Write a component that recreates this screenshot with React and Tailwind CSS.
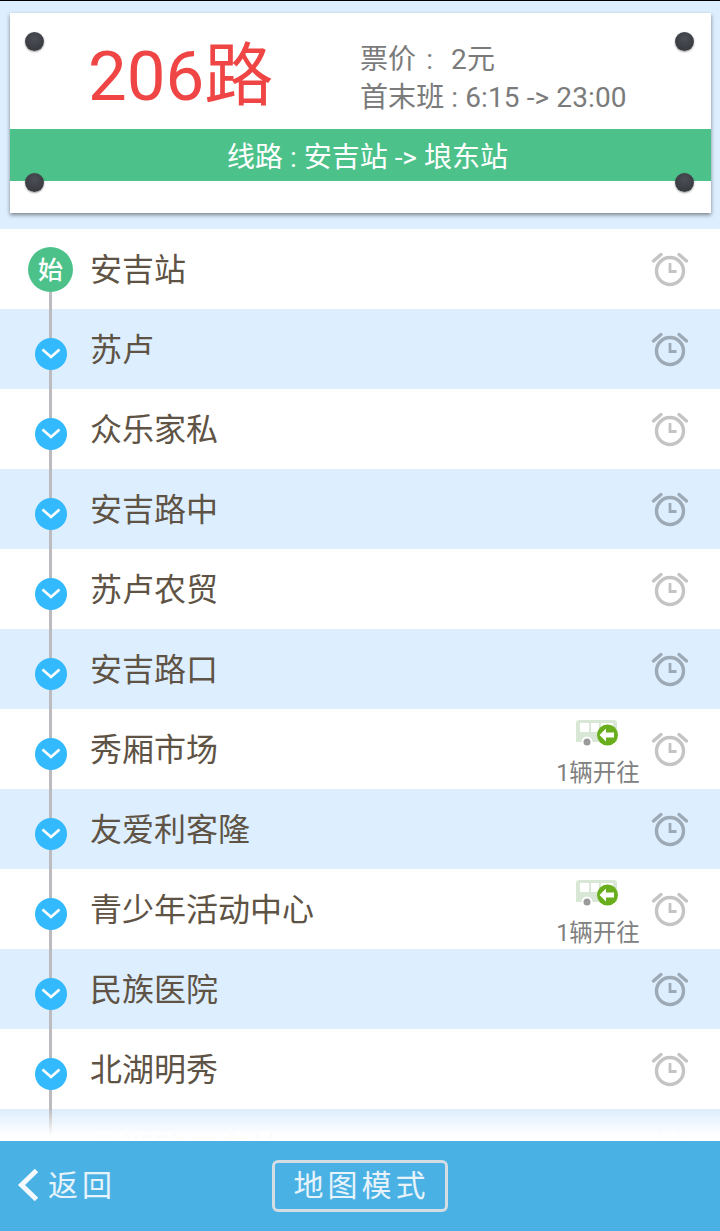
import React from "react";

const FONT = "font-['Roboto','Noto_Sans_CJK_SC',sans-serif]";

const STOPS = [
  { name: "安吉站", start: true },
  { name: "苏卢" },
  { name: "众乐家私" },
  { name: "安吉路中" },
  { name: "苏卢农贸" },
  { name: "安吉路口" },
  { name: "秀厢市场", bus: true },
  { name: "友爱利客隆" },
  { name: "青少年活动中心", bus: true },
  { name: "民族医院" },
  { name: "北湖明秀" },
  // cut off by the footer fade, its marker never shows
  { name: "北湖路口东站", noMarker: true },
];

function Pin({ className }) {
  return (
    <div className={`absolute w-[19px] h-[19px] rounded-full bg-[radial-gradient(circle_at_50%_35%,#4c4f56,#303237)] shadow-[0_1px_2px_rgba(0,0,0,0.4)] ${className}`} />
  );
}

function Alarm({ color }) {
  return (
    <svg width="38" height="36" viewBox="0 0 38 36" fill="none" stroke={color} strokeLinecap="round">
      <circle cx="19" cy="20" r="13.500" strokeWidth="3.4" />
      <path d="M19 12v8.500h6.500" strokeWidth="2.800" strokeLinecap="butt" />
      <path d="M2.500 10 10 3.500M35.500 10 28 3.500" strokeWidth="3.400" />
    </svg>
  );
}

function BusIcon() {
  return (
    <svg width="43" height="28" viewBox="0 0 43 28">
      <path d="M3 0h35a3 3 0 0 1 3 3v19H0V3a3 3 0 0 1 3-3z" fill="#d9e8d6" />
      <rect x="4" y="3" width="9" height="9" fill="#fff" />
      <rect x="15" y="3" width="8" height="9" fill="#fff" />
      <rect x="25" y="3" width="12" height="9" fill="#fff" />
      <circle cx="11" cy="22" r="5.500" fill="#fff" />
      <circle cx="11" cy="22" r="3.500" fill="#9a9a9a" />
      <circle cx="31.500" cy="15" r="10.500" fill="#69ae1c" />
      <path d="M23.500 15l6.500-6.500v4h8v5h-8v4z" fill="#fff" />
    </svg>
  );
}

function Marker({ start }) {
  if (start) {
    return (
      <div className="relative z-10 w-[45px] h-[45px] rounded-full bg-[#4cc28a] flex items-center justify-center pt-[2px] text-white text-[25px] font-medium leading-none">
        始
      </div>
    );
  }
  return (
    <div className="relative z-10 mt-[9px] w-[32px] h-[32px] rounded-full bg-[#33b9fd] flex items-center justify-center">
      <svg width="20" height="11" viewBox="0 0 20 11" fill="none" stroke="#fff" strokeWidth="2.600">
        <path d="M1.500 1.500 10 9l8.500-7.500" />
      </svg>
    </div>
  );
}

function StopRow({ stop, index }) {
  const shaded = index % 2 === 1;
  return (
    <div className={`relative h-20 shrink-0 flex items-center ${shaded ? "bg-[#ddeefe]" : "bg-white"}`}>
      <div
        className={`absolute left-[49px] w-[3px] bg-[#bcbcc0] ${stop.start ? "top-[60px] bottom-0" : "inset-y-0"}`}
      />
      <div className="w-[101px] pl-[28px] shrink-0 flex justify-center pr-[28px]">
        {!stop.noMarker && <Marker start={stop.start} />}
      </div>
      <div className="flex-1 -ml-[11px] mt-[1px] text-[32px] leading-none text-[#5e5344]">{stop.name}</div>
      {stop.bus && (
        <div className="w-[90px] self-start pt-[11px] flex flex-col items-center mr-[8px]">
          <div className="pr-[2px]"><BusIcon /></div>
          <div className="text-[23.5px] leading-[26px] mt-[12px] text-[#808080] whitespace-nowrap">1辆开往</div>
        </div>
      )}
      <div className="w-[38px] mr-[31px] shrink-0">
        <Alarm color={shaded ? "#9daab6" : "#c4c4c4"} />
      </div>
    </div>
  );
}

export default function App() {
  return (
    <div className={`${FONT} w-[720px] h-[1231px] flex flex-col overflow-hidden bg-white relative`}>
      <div className="h-px bg-black shrink-0" />
      <div className="bg-[#ddeefe] h-[228px] shrink-0 pt-3 pl-[10px] pr-[9px]">
        <div className="relative h-[200px] bg-white shadow-[0_2px_4px_rgba(0,0,0,0.45)]">
          <div className="h-[116px] flex">
            <div className="w-[350px] pl-[78px] pt-[24px] text-[69px] leading-[80px] text-[#ef4545]">206路</div>
            <div className="pt-[28px] text-[28px] leading-[38px] tracking-[0.1px] text-[#7b7b7b]">
              <div>票价<span className="ml-[10px] mr-[18px]">:</span>2元</div>
              <div>首末班 : 6:15 -&gt; 23:00</div>
            </div>
          </div>
          <div className="h-[52px] bg-[#4cc28a] flex items-center justify-center pl-[14px] pt-[5px] text-[28px] text-white">
            线路 : 安吉站 -&gt; 埌东站
          </div>
          <Pin className="left-[15px] top-[19px]" />
          <Pin className="right-[17px] top-[19px]" />
          <Pin className="left-[15px] top-[160px]" />
          <Pin className="right-[17px] top-[160px]" />
        </div>
      </div>
      <div className="relative flex-1 min-h-0 overflow-hidden flex flex-col">
        {STOPS.map((s, i) => (
          <StopRow key={s.name} stop={s} index={i} />
        ))}
        <div className="absolute left-0 right-0 bottom-0 h-[32px] bg-gradient-to-b from-white/0 via-white/97 via-80% to-white" />
      </div>
      <div className="h-[90px] shrink-0 bg-[#4ab1e4] flex items-center relative">
        <svg className="ml-[17px] mt-[-2px]" width="23" height="34" viewBox="0 0 23 34" fill="none" stroke="#f4fafd" strokeWidth="5">
          <path d="M19.500 2.500 4.500 17l15 14.500" />
        </svg>
        <span className="ml-[8px] w-[72px] text-[30px] leading-none tracking-[4px] text-[#e6f3fb]">返回</span>
        <div className="ml-[152px] w-[176px] h-[52px] mt-[-1px] border-[3px] border-[#d3dde3] rounded-[6px] flex items-center justify-center pl-[3px] text-[30px] tracking-[4px] text-[#e6f3fb]">
          地图模式
        </div>
      </div>
    </div>
  );
}
